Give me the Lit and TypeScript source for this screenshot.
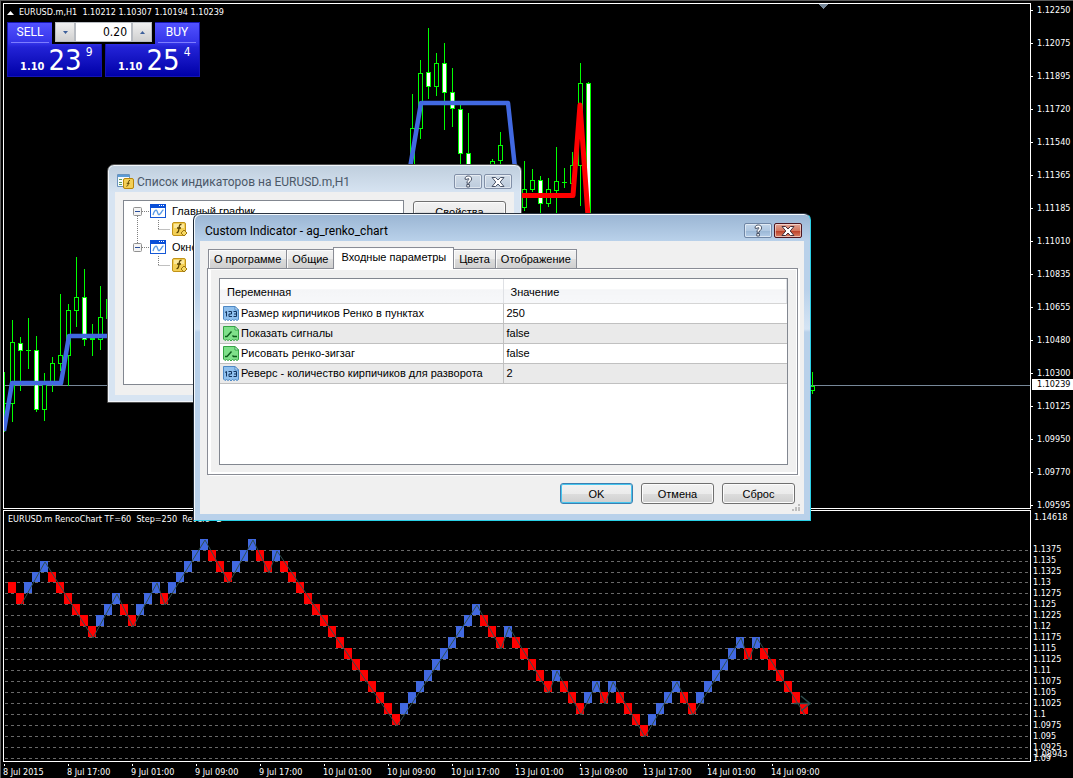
import { LitElement, html, svg, css, nothing } from "lit";
import { customElement } from "lit/decorators.js";

type Candle = [x: number, high: number, low: number, top: number, bottom: number, kind: "bull" | "bear"];

const CANDLES: Candle[] = [
  [4, 372, 431, 403, 403, "bull"],
  [12, 320, 421, 342, 403, "bull"],
  [20, 337, 390, 343, 350, "bear"],
  [28, 318, 368, 350, 350, "bull"],
  [36, 336, 411, 350, 409, "bear"],
  [44, 373, 420, 384, 409, "bull"],
  [52, 357, 391, 363, 384, "bull"],
  [60, 294, 370, 355, 363, "bull"],
  [68, 304, 385, 310, 355, "bull"],
  [76, 257, 326, 297, 310, "bull"],
  [84, 269, 345, 297, 339, "bear"],
  [92, 324, 355, 338, 339, "bull"],
  [100, 286, 349, 317, 339, "bull"],
  [108, 290, 330, 299, 318, "bull"],
  [412, 94, 170, 128, 164, "bull"],
  [420, 60, 138, 73, 128, "bull"],
  [428, 28, 98, 72, 86, "bear"],
  [436, 53, 95, 63, 86, "bull"],
  [444, 43, 129, 63, 92, "bear"],
  [452, 68, 126, 92, 108, "bear"],
  [460, 105, 170, 109, 153, "bear"],
  [468, 113, 200, 153, 190, "bear"],
  [492, 159, 180, 161, 170, "bull"],
  [500, 132, 170, 145, 160, "bull"],
  [524, 161, 210, 189, 207, "bull"],
  [532, 169, 191, 180, 189, "bull"],
  [540, 176, 220, 180, 203, "bear"],
  [548, 178, 206, 189, 203, "bull"],
  [556, 147, 220, 181, 190, "bull"],
  [564, 168, 187, 182, 182, "bull"],
  [572, 152, 190, 165, 183, "bull"],
  [580, 63, 205, 83, 165, "bull"],
  [588, 82, 220, 83, 220, "bear"],
  [812, 372, 393, 386, 390, "bull"],
];

const PRICES = [
  "1.12250", "1.12075", "1.11895", "1.11720", "1.11540", "1.11365", "1.11185", "1.11010",
  "1.10835", "1.10655", "1.10480", "1.10300", "1.10125", "1.09950", "1.09770", "1.09595",
];

const LEVELS = [
  "1.1375", "1.135", "1.1325", "1.13", "1.1275", "1.125", "1.1225", "1.12", "1.1175", "1.115",
  "1.1125", "1.11", "1.1075", "1.105", "1.1025", "1.1", "1.0975", "1.095", "1.0925", "1.09",
];

const TIMES = [
  "8 Jul 2015", "8 Jul 17:00", "9 Jul 01:00", "9 Jul 09:00", "9 Jul 17:00", "10 Jul 01:00", "10 Jul 09:00",
  "10 Jul 17:00", "13 Jul 01:00", "13 Jul 09:00", "13 Jul 17:00", "14 Jul 01:00", "14 Jul 09:00",
];

/* Turning bricks of the renko walk: [brick index, level]. */
const TURNS: [number, number][] = [
  [0, 4], [1, 5], [4, 2], [10, 8], [13, 5], [15, 7], [18, 4], [19, 5], [24, 0], [27, 3], [30, 0], [32, 2],
  [33, 1], [48, 16], [58, 6], [61, 9], [62, 8], [67, 13], [68, 12], [71, 15], [73, 13], [74, 14], [75, 13],
  [79, 17], [83, 13], [85, 15], [91, 9], [92, 10], [93, 9], [99, 15],
];

/* Top of a renko level inside the lower pane. */
const levelY = (n: number) => 29 + n * 11 - (n > 3 ? 1 : 0);

function bricks() {
  const out: { x: number; level: number; up: boolean }[] = [{ x: 5, level: 4, up: false }];
  for (let t = 1; t < TURNS.length; t++) {
    const [i0, l0] = TURNS[t - 1];
    const [i1, l1] = TURNS[t];
    const up = l1 < l0;
    const n = i1 - i0;
    for (let k = 1; k <= n; k++) {
      out.push({ x: 5 + (i0 + k) * 8, level: up ? l1 + (n - k) : l1 - (n - k), up });
    }
  }
  return out;
}

function zigzag() {
  return TURNS.slice(1)
    .map(([i, l], n) => `${9 + i * 8},${n % 2 === 0 ? levelY(l + 1) : levelY(l)}`)
    .join(" ");
}

const helpGlyph = svg`<path d="M3 4.2C3 1.9 4.4 1 6.2 1s3.4 1 3.4 2.9c0 2.3-2.3 2.3-2.3 4.3H4.9c0-2.7 2-2.9 2-4.2 0-.7-1.5-.8-1.6.4zM4.8 9.5h2.6V12H4.8z" fill="#fff" stroke="#4a5468" stroke-width="1"/>`;
const closeGlyph = (stroke: string) => svg`<path d="M1 1.5h3.6L7 4l2.4-2.5H13L9.200 6 13 10.500H9.400L7 8l-2.400 2.500H1L4.800 6z" fill="#fff" stroke=${stroke} stroke-width="1"/>`;

@customElement("chart-view")
class ChartView extends LitElement {
  static styles = css`
    :host {
      display: grid;
      grid-template-columns: minmax(0, 1fr) 42px;
      padding: 2px 0 0 2px;
      border-top: 1px solid #5c5c5c;
      border-left: 1px solid #5c5c5c;
      background: #000;
      color: #fff;
      font: 9px/15px "DejaVu Sans Condensed", "Noto Sans", sans-serif;
    }
    .pane {
      position: relative;
      border: 1px solid #fff;
      overflow: hidden;
    }
    .main {
      height: 504px;
    }
    .sub {
      height: 250px;
      margin-top: 1px;
    }
    .plot {
      position: absolute;
      inset: 0;
      width: 100%;
      height: 100%;
      shape-rendering: crispEdges;
    }
    .smooth {
      shape-rendering: auto;
    }
    .head {
      position: relative;
      display: flex;
      align-items: center;
      gap: 5px;
      padding: 0 3px;
      line-height: 17px;
      white-space: pre;
    }
    .sub .head {
      padding: 0 4px;
    }
    .trade {
      position: relative;
      display: grid;
      grid-template-columns: 95px 95px;
      gap: 3px;
      width: max-content;
      margin: 1px 3px;
    }
    .deal {
      grid-row: 1;
      display: grid;
      grid-template-rows: 20px 35px;
      height: 55px;
      padding: 0;
      border: 1px solid #1414b4;
      color: #fff;
      background: linear-gradient(#5252ff, #3434e8 20px, #2323d6 24px, #0000a8);
      font: 12px/18px Roboto, "Noto Sans", sans-serif;
      text-align: left;
    }
    .sell {
      grid-column: 1;
    }
    .buy {
      grid-column: 2;
    }
    .word {
      width: 38px;
      margin: 0 3px;
      border-bottom: 1px solid #7d7dff;
      text-align: center;
    }
    .buy .word {
      justify-self: end;
    }
    .quote {
      display: flex;
      padding-left: 12px;
      gap: 4px;
      font: 12px/22px "DejaVu Sans Condensed", "Noto Sans", sans-serif;
    }
    .quote b {
      align-self: end;
      font-weight: 700;
      font-size: 11px;
    }
    .quote big {
      font-size: 29px;
      line-height: 34px;
    }
    .quote sup {
      line-height: 18px;
      vertical-align: baseline;
      font-size: 12px;
    }
    .volume {
      grid-column: 1 / -1;
      grid-row: 1;
      z-index: 1;
      align-self: start;
      justify-self: center;
      display: flex;
      width: 97px;
      height: 20px;
      padding: 0 3px 2px;
      background: #000;
    }
    .volume input {
      flex: 1;
      min-width: 0;
      box-sizing: border-box;
      border: 1px solid #b8bcc2;
      padding: 0 4px;
      background: #fff;
      color: #000;
      font: 12px/18px "DejaVu Sans Condensed", "Noto Sans", sans-serif;
      text-align: right;
      outline: 0;
    }
    .step {
      width: 20px;
      padding: 0;
      border: 1px solid #b8bcc2;
      background: linear-gradient(#f0f0f0, #d0d0d0);
      display: grid;
      place-items: center;
    }
    .scale {
      position: relative;
    }
    .price {
      height: 33px;
      padding-left: 6px;
      position: relative;
    }
    .price::before {
      content: "";
      position: absolute;
      left: 0;
      top: 7px;
      width: 2px;
      height: 1px;
      background: #fff;
    }
    .prices {
      height: 506px;
    }
    .now {
      position: absolute;
      top: 376px;
      left: 1px;
      right: 0;
      height: 11px;
      padding-left: 5px;
      background: #fff;
      color: #000;
      line-height: 11px;
    }
    .levels {
      padding: 35px 0 0 2px;
      line-height: 11px;
    }
    .bound {
      position: absolute;
      left: 3px;
      line-height: 11px;
    }
    .bound.top {
      top: 3px;
    }
    .bound.low {
      top: 240px;
    }
    .times {
      display: grid;
      grid-auto-flow: column;
      grid-auto-columns: 64px;
      justify-content: start;
      height: 16px;
      line-height: 16px;
      white-space: nowrap;
    }
    .times span {
      position: relative;
    }
    .times span::before {
      content: "";
      position: absolute;
      left: 1px;
      top: 0;
      width: 1px;
      height: 2px;
      background: #fff;
    }
  `;

  private candle([x, high, low, top, bottom, kind]: Candle) {
    const cx = x - 4;
    const y = (v: number) => v - 4;
    return svg`
      <rect x=${cx} y=${y(high)} width="1" height=${low - high + 1} fill="#00ff00"/>
      <rect x=${cx - 2} y=${y(top)} width="5" height=${bottom - top + 1} fill="#00ff00"/>
      ${bottom - top > 1
        ? svg`<rect x=${cx - 1} y=${y(top) + 1} width="3" height=${bottom - top - 1} fill=${kind === "bear" ? "#fff" : "#000"}/>`
        : nothing}
    `;
  }

  render() {
    return html`
      <section class="pane main" aria-label="EURUSD.m,H1">
        <svg class="plot" aria-hidden="true">
          <rect x="0" y="381" width="100%" height="1" fill="#778899" />
          ${CANDLES.map((c) => this.candle(c))}
          <g class="smooth" fill="none" stroke-width="4" stroke-linejoin="round">
            <path d="M0 427L8 379H57L65 332H110M406 164L417 99H504L511 164" stroke="#4169e1" stroke-width="4.500" />
            <path d="M514 191.500H569L576 101L584 212" stroke="#ff0000" stroke-width="5" />
          </g>
          <path d="M814 0H824L819 5Z" fill="#778899" />
        </svg>
        <div class="head">
          <svg width="7" height="4" aria-hidden="true"><path d="M0 4L3.500 0L7 4Z" fill="#fff" /></svg>
          <span>EURUSD.m,H1  1.10212 1.10307 1.10194 1.10239</span>
        </div>
        <div class="trade">
          <button class="deal sell">
            <span class="word">SELL</span>
            <span class="quote"><b>1.10</b><big>23</big><sup>9</sup></span>
          </button>
          <button class="deal buy">
            <span class="word">BUY</span>
            <span class="quote"><b>1.10</b><big>25</big><sup>4</sup></span>
          </button>
          <div class="volume">
            <button class="step" aria-label="Decrease volume">
              <svg width="5" height="3"><path d="M0 0H5L2.500 3Z" fill="#3c5f9a" /></svg>
            </button>
            <input aria-label="Volume" value="0.20" />
            <button class="step" aria-label="Increase volume">
              <svg width="5" height="3"><path d="M0 3H5L2.500 0Z" fill="#3c5f9a" /></svg>
            </button>
          </div>
        </div>
      </section>
      <div class="scale prices">
        ${PRICES.map((p) => html`<div class="price">${p}</div>`)}
        <div class="now">1.10239</div>
      </div>
      <section class="pane sub" aria-label="RencoChart">
        <svg class="plot" aria-hidden="true">
          ${LEVELS.map((_, i) => svg`<line x1="1" x2="100%" y1=${levelY(i + 1) - 0.5} y2=${levelY(i + 1) - 0.5} stroke="#696969" stroke-dasharray="3 3"/>`)}
          ${bricks().map((b) => svg`<rect x=${b.x - 1} y=${levelY(b.level) - 1} width="8" height=${levelY(b.level + 1) - levelY(b.level)} fill=${b.up ? "#4169e1" : "#ff0000"}/>`)}
          <g class="smooth" fill="none" stroke="#2f4f4f">
            <polyline points=${zigzag()} />
            <path d="M790 192.500H807M797 185L806 192.500L797 200" stroke-width="1.500" />
          </g>
        </svg>
        <div class="head">EURUSD.m RencoChart TF=60  Step=250  Revers=2</div>
      </section>
      <div class="scale">
        <div class="bound top">1.14618</div>
        <div class="levels">${LEVELS.map((l) => html`<div>${l}</div>`)}</div>
        <div class="bound low">1.08943</div>
      </div>
      <div class="times">${TIMES.map((t) => html`<span>${t}</span>`)}</div>
    `;
  }
}

const windowChrome = css`
  .window {
    box-sizing: border-box;
    display: flex;
    flex-direction: column;
    color: #000;
    font: 11px/16px "Liberation Sans", Arial, sans-serif;
  }
  .title {
    display: flex;
    align-items: center;
    gap: 2px;
    height: 21px;
    font: 12px/16px Roboto, "Noto Sans", sans-serif;
  }
  .title h2 {
    flex: 1;
    margin: 0;
    font: inherit;
  }
  .cap {
    display: grid;
    place-items: center;
    width: 28px;
    height: 15px;
    padding: 0;
    border: 1px solid #6f86a5;
    border-radius: 2px;
    box-shadow: inset 0 0 0 1px #ffffff80;
    background: linear-gradient(#c3d6ea, #b0c8e2 50%, #98b5d4 50%, #b4cde8);
  }
  .cap.idle {
    background: linear-gradient(#cfdae6, #bccbdc);
    border-color: #8290a8;
  }
  .cap.close {
    border-color: #4d1620;
    background: linear-gradient(#e3a595, #d3775f 50%, #b93a22 50%, #d98066);
  }
  .push {
    height: 21px;
    padding: 0;
    border: 1px solid #707070;
    border-radius: 3px;
    box-shadow: inset 0 0 0 1px #fcfcfc;
    background: linear-gradient(#f2f2f2, #ebebeb 50%, #dddddd 50%, #cfcfcf);
    color: #000;
    font: inherit;
  }
`;

@customElement("indicator-list")
class IndicatorList extends LitElement {
  static styles = [
    windowChrome,
    css`
      .window {
        width: 415px;
        padding: 0 7px 7px;
        border: 1px solid #4e4e4e;
        border-radius: 7px 7px 0 0;
        box-shadow: inset 0 0 0 1px #f2f6fa;
        background: linear-gradient(#bfcedd, #d7e4f2 28px);
      }
      .title {
        padding: 6px 2px 0 2px;
        color: #4b5868;
      }
      .title h2 {
        padding-left: 1px;
      }
      .body {
        display: grid;
        grid-template-columns: 281px 93px;
        align-items: start;
        gap: 9px;
        padding: 8px 8px 10px;
        background: #f0f0f0;
      }
      .tree {
        box-sizing: border-box;
        height: 185px;
        margin: 0;
        padding: 1px 9px;
        border: 1px solid #828790;
        background: #fff;
        list-style: none;
      }
      .tree ul {
        margin: 0;
        padding: 0;
        list-style: none;
      }
      .row {
        display: flex;
        align-items: center;
        gap: 5px;
        height: 18px;
        white-space: nowrap;
      }
      .push {
        margin-top: 1px;
      }
    `,
  ];

  private branch(label: string, child: string, last: boolean) {
    return html`<li>
      <div class="row">
        <svg width="34" height="18" aria-hidden="true">
          <path d="M9 9.500H16${last ? "M4.500 0V5" : "M4.500 14V18"}" stroke="#808080" stroke-dasharray="1 1" />
          <rect x=".5" y="5.500" width="8" height="8" rx="1" fill="#f4f4f4" stroke="#919191" />
          <path d="M2 9.500H7" stroke="#2b4f9c" />
          <rect x="17.500" y="2.500" width="15" height="13" fill="#fff" stroke="#1558d6" />
          <path d="M17 2H33V6H17Z" fill="#0a4fd8" />
          <path d="M26 3.500H32" stroke="#fff" stroke-dasharray="1 1" />
          <path d="M20 13C21 9 23 7 24 9S25 14 27 12S29 8 30.500 8" fill="none" stroke="#5b9be6" stroke-width="1.300" />
        </svg>
        <span>${label}</span>
      </div>
      <ul>
        <li class="row">
          <svg width="56" height="18" aria-hidden="true">
            <path d="M25.500 0V10M25.500 9.500H37${last ? "" : "M4.500 0V18"}" fill="none" stroke="#808080" stroke-dasharray="1 1" />
            <rect x="39.500" y="2.500" width="13" height="13" rx="1.500" fill="#f3cf55" stroke="#c29317" />
            <path d="M41 4H51V8H41Z" fill="#fbe79a" />
            <path d="M48.500 4.500C46.500 4 46.300 6 46 8.500S45 13 43.500 12.500M44 8H48" fill="none" stroke="#5a4300" stroke-width="1.300" />
            <path d="M51 10L54 13L51 16L48 13Z" fill="#f7d964" stroke="#9a7412" />
          </svg>
          <span>${child}</span>
        </li>
      </ul>
    </li>`;
  }

  render() {
    return html`
      <section class="window" aria-labelledby="list-title">
        <header class="title">
          <svg width="17" height="17" viewBox="0 0 17 17" aria-hidden="true">
            <path d="M.5 1.500H12.500V13.500H.5Z" fill="#f6fafd" stroke="#6a93bd" />
            <path d="M1 2H12V4H1Z" fill="#5b9bd5" />
            <path d="M2 6.500H5M2 9.500H5M2 11.500H5" stroke="#5fa05a" />
            <rect x="6.500" y="5.500" width="10" height="10" rx="1.500" fill="#f3cf55" stroke="#b8860b" />
            <path d="M13 7.500C11.500 7 11.500 9 11.300 10.500S10.500 13.500 9.500 13.200M9.700 10.300H12.500" fill="none" stroke="#5a4300" />
          </svg>
          <h2 id="list-title">Список индикаторов на EURUSD.m,H1</h2>
          <button class="cap idle" aria-label="Справка"><svg width="12" height="13" viewBox="0 0 12 13">${helpGlyph}</svg></button>
          <button class="cap idle" aria-label="Закрыть"><svg width="14" height="12" viewBox="0 0 14 12">${closeGlyph("#4a5468")}</svg></button>
        </header>
        <div class="body">
          <ul class="tree">
            ${this.branch("Главный график", "ag_renko_chart", false)} ${this.branch("Окно индикатора 1", "RencoChart", true)}
          </ul>
          <button class="push">Свойства</button>
        </div>
      </section>
    `;
  }
}

const PARAMS = [
  { name: "Размер кирпичиков Ренко в пунктах", value: "250", numeric: true },
  { name: "Показать сигналы", value: "false", numeric: false },
  { name: "Рисовать ренко-зигзаг", value: "false", numeric: false },
  { name: "Реверс - количество кирпичиков для разворота", value: "2", numeric: true },
];

const TABS = ["О программе", "Общие", "Входные параметры", "Цвета", "Отображение"];

@customElement("indicator-settings")
class IndicatorSettings extends LitElement {
  static styles = [
    windowChrome,
    css`
      .window {
        width: 618px;
        padding: 0 6px 6px;
        border: 1px solid #2bd0e6;
        border-top-color: #2a3340;
        border-left-color: #1d2733;
        border-radius: 7px 7px 0 0;
        box-shadow: inset 1px 1px 0 #f4f9fd;
        background: linear-gradient(#9ab5d3, #b9d1ea 27px, #b9d1ea 75px, #d5e4f4 115px, #b9d1ea 118px);
      }
      .title {
        padding: 6px 2px 0 5px;
      }
      .body {
        display: flex;
        flex-direction: column;
        padding: 6px 3px 3px 7px;
        background: #f0f0f0;
      }
      .tabs {
        display: flex;
        align-items: end;
        padding-left: 1px;
      }
      .tab {
        box-sizing: border-box;
        height: 19px;
        padding: 0 5px;
        border: 1px solid #898c95;
        border-bottom: 0;
        background: linear-gradient(#f2f2f2, #ebebeb 50%, #dddddd 50%, #cfcfcf);
        box-shadow: inset 1px 1px 0 #fcfcfc;
        font: inherit;
        color: #000;
        white-space: nowrap;
      }
      .tab + .tab {
        margin-left: -1px;
      }
      .tab.on {
        z-index: 1;
        height: 22px;
        margin-bottom: -1px;
        padding: 0 7px 3px;
        background: #fff;
      }
      .page {
        margin-right: 3px;
        padding: 9px;
        border: 1px solid #898c95;
        background: #f0f0f0;
        box-shadow: inset 3px -2px 0 #fff, inset -1px 1px 0 #fff, 2px 1px 0 #fff;
      }
      .list {
        height: 185px;
        margin-left: 2px;
        border: 1px solid #828790;
        background: #fff;
      }
      table {
        width: 100%;
        table-layout: fixed;
        border-collapse: collapse;
      }
      .first {
        width: 283px;
      }
      th {
        height: 24px;
        box-sizing: border-box;
        padding: 3px 7px 0;
        border-right: 1px solid #dfe1e5;
        border-bottom: 1px solid #d5d5d5;
        background: linear-gradient(#fff 40%, #f4f5f7 45%, #f7f8fa);
        font-weight: 400;
        text-align: left;
      }
      td {
        height: 20px;
        box-sizing: border-box;
        padding: 0 3px;
        border-bottom: 1px solid #c0c0c0;
      }
      td:first-child {
        border-right: 1px solid #c0c0c0;
      }
      tr:nth-child(even) td {
        background: #eaeaea;
      }
      .name {
        display: flex;
        align-items: center;
        gap: 1px;
        white-space: nowrap;
      }
      .foot {
        display: flex;
        justify-content: end;
        gap: 8px;
        padding: 8px 6px 0 0;
      }
      .foot .push {
        width: 73px;
      }
      .push.main {
        border-color: #3c7fb1;
        box-shadow: inset 0 0 0 1px #46c5ee;
      }
      .grip {
        display: block;
        align-self: end;
      }
    `,
  ];

  private kindIcon(numeric: boolean) {
    const edge = numeric ? "#4d88c4" : "#35a345";
    return html`<svg width="17" height="17" viewBox="0 0 17 17" aria-hidden="true">
      <path
        d="M.5 1.500H12L15.500 5V14.500L14 15.500L12.500 14.500L11 15.500L9.500 14.500L8 16L6.500 14.500L5 15.500L3.500 14.500L2 15.500L.5 14Z"
        fill=${numeric ? "#8fc0ee" : "#7fe08a"}
        stroke=${edge}
      />
      <path d="M12 1.500V5H15.500Z" fill="#e8f4ff" stroke=${edge} />
      ${numeric
        ? svg`<path d="M2 7.500L3.500 6.500V11.500M5.500 6.500H8.500V9H6V11.500H9M10.500 6.500H13.500V11.500H10.500M11 9H13.500" fill="none" stroke="#12345e"/>`
        : svg`<path d="M2 11.500H4L8.500 6.500M9.500 10.500L10.500 11.500H14" fill="none" stroke="#0d5a1c" stroke-width="1.400"/>`}
    </svg>`;
  }

  render() {
    return html`
      <section class="window" role="dialog" aria-labelledby="dialog-title">
        <header class="title">
          <h2 id="dialog-title">Custom Indicator - ag_renko_chart</h2>
          <button class="cap" aria-label="Справка"><svg width="12" height="13" viewBox="0 0 12 13">${helpGlyph}</svg></button>
          <button class="cap close" aria-label="Закрыть"><svg width="14" height="12" viewBox="0 0 14 12">${closeGlyph("#44303a")}</svg></button>
        </header>
        <div class="body">
          <div class="tabs" role="tablist">
            ${TABS.map((t, i) => html`<button class="tab ${i === 2 ? "on" : ""}" role="tab" aria-selected=${i === 2}>${t}</button>`)}
          </div>
          <div class="page" role="tabpanel">
            <div class="list">
              <table>
                <thead>
                  <tr><th class="first">Переменная</th><th>Значение</th></tr>
                </thead>
                <tbody>
                  ${PARAMS.map((p) => html`<tr><td><span class="name">${this.kindIcon(p.numeric)}${p.name}</span></td><td>${p.value}</td></tr>`)}
                </tbody>
              </table>
            </div>
          </div>
          <div class="foot">
            <button class="push main">OK</button>
            <button class="push">Отмена</button>
            <button class="push">Сброс</button>
          </div>
          <svg class="grip" width="9" height="7" aria-hidden="true">
            <path d="M6 0h2v2h-2zM3 3h2v2h-2zM6 3h2v2h-2zM0 5h2v2h-2zM3 5h2v2h-2zM6 5h2v2h-2z" fill="#bdbdbd" />
          </svg>
        </div>
      </section>
    `;
  }
}

@customElement("app-root")
class AppRoot extends LitElement {
  static styles = css`
    :host {
      display: block;
      position: relative;
      min-height: 100vh;
      overflow: hidden;
      background: #000;
    }
    .under {
      position: absolute;
      left: 107px;
      top: 164px;
    }
    .over {
      position: absolute;
      left: 193px;
      top: 213px;
    }
  `;

  render() {
    return html`
      <chart-view></chart-view>
      <indicator-list class="under"></indicator-list>
      <indicator-settings class="over"></indicator-settings>
    `;
  }
}
